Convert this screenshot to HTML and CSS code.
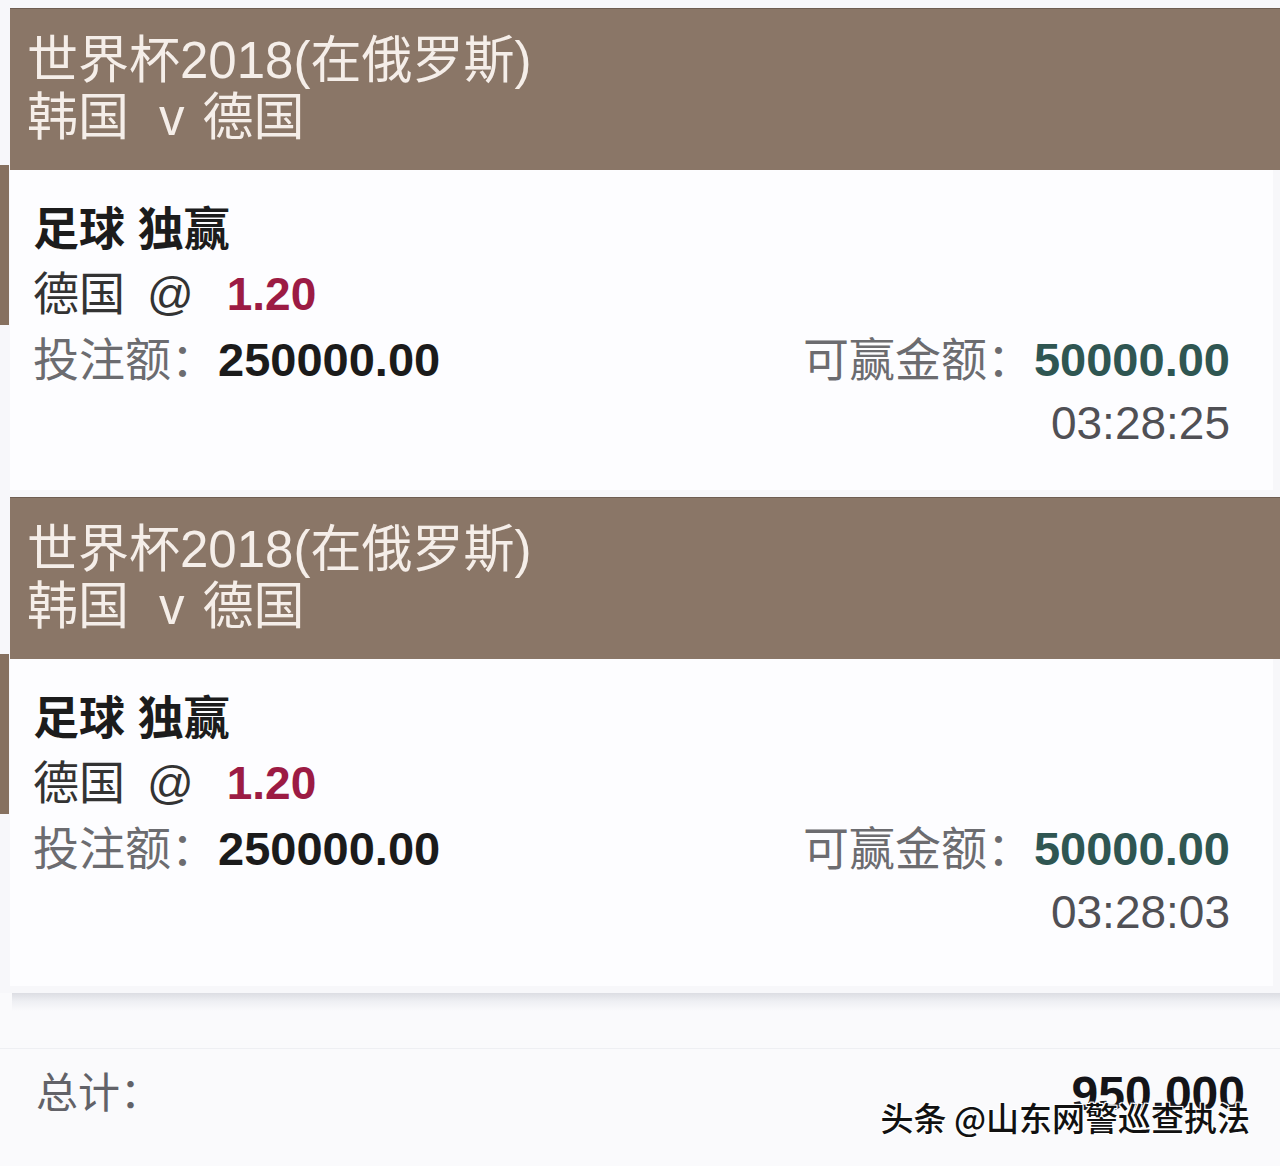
FILE: index.html
```html
<!DOCTYPE html>
<html lang="zh-CN">
<head>
<meta charset="utf-8">
<title>投注单</title>
<link rel="stylesheet" href="styles.css">
</head>
<body>
<div class="page">
  <section class="bet">
    <div class="rail"><div class="rail-mark"></div></div>
    <div class="bet-main">
      <header class="bet-head">
        <div class="event">世界杯2018(在俄罗斯)</div>
        <div class="match">韩国<span class="vs">v</span>德国</div>
      </header>
      <div class="bet-body">
        <div class="row market">足球 独赢</div>
        <div class="row pick">德国<span class="at">@</span><span class="odds">1.20</span></div>
        <div class="row amounts">
          <div class="stake"><span class="label">投注额：</span><span class="num">250000.00</span></div>
          <div class="win"><span class="label">可赢金额：</span><span class="num win-num">50000.00</span></div>
        </div>
        <div class="row time">03:28:25</div>
      </div>
    </div>
  </section>

  <section class="bet">
    <div class="rail"><div class="rail-mark"></div></div>
    <div class="bet-main">
      <header class="bet-head">
        <div class="event">世界杯2018(在俄罗斯)</div>
        <div class="match">韩国<span class="vs">v</span>德国</div>
      </header>
      <div class="bet-body last">
        <div class="row market">足球 独赢</div>
        <div class="row pick">德国<span class="at">@</span><span class="odds">1.20</span></div>
        <div class="row amounts">
          <div class="stake"><span class="label">投注额：</span><span class="num">250000.00</span></div>
          <div class="win"><span class="label">可赢金额：</span><span class="num win-num">50000.00</span></div>
        </div>
        <div class="row time">03:28:03</div>
      </div>
    </div>
  </section>

  <footer class="total">
    <div class="total-rule"></div>
    <div class="total-row">
      <span class="total-label">总计：</span>
      <span class="total-num">950,000</span>
    </div>
    <div class="watermark">头条 @山东网警巡查执法</div>
  </footer>
</div>
</body>
</html>
```

FILE: styles.css
```css
* { box-sizing: border-box; }

html, body {
  margin: 0;
  padding: 0;
  background: #f7f7fa;
}

body {
  font-family: "Liberation Sans", "Noto Sans CJK SC", sans-serif;
  width: 1280px;
  height: 1166px;
  overflow: hidden;
}

.page {
  padding-top: 8px;
  display: flex;
  flex-direction: column;
  gap: 7px;
}

.bet {
  display: flex;
}

.rail {
  width: 10px;
  flex: none;
  padding-top: 157px;
}

.rail-mark {
  width: 9px;
  height: 160px;
  background: #86705f;
}

.bet-main {
  flex: 1;
  display: flex;
  flex-direction: column;
}

.bet-head {
  height: 162px;
  background: #8a7667;
  border-top: 1px solid #6e5d52;
  padding: 23px 0 0 17px;
  color: #f5eee9;
  font-size: 51px;
  line-height: 57px;
}

.vs {
  margin: 0 18px 0 30px;
}

.bet-body {
  background: #fdfdff;
  margin-right: 7px;
  padding: 27px 43px 37px 23px;
  font-size: 46px;
  line-height: 65px;
  display: flex;
  flex-direction: column;
}

.bet-body.last {
  padding-bottom: 44px;
}

.market {
  font-weight: 700;
  color: #1c1c1c;
}

.pick {
  color: #333333;
}

.at {
  margin-left: 22px;
  font-family: "Liberation Sans", sans-serif;
}

.odds {
  margin-left: 33px;
  font-weight: 700;
  color: #9c1b44;
}

.amounts {
  display: flex;
  justify-content: space-between;
  align-items: baseline;
}

.label {
  color: #6c6c70;
}

.num {
  font-weight: 700;
  font-size: 47px;
  color: #1b1b1b;
  margin-left: 1px;
}

.win-num {
  color: #2f5652;
}

.time {
  text-align: right;
  color: #505055;
  line-height: 60px;
}

.total {
  position: relative;
  height: 180px;
  background: #fafafc;
}

.total-rule {
  margin-left: 12px;
  height: 18px;
  background: linear-gradient(#dcdde3, #eeeff3 45%, #fafafc);
}

.total-row {
  margin-top: 37px;
  display: flex;
  justify-content: space-between;
  align-items: center;
  padding: 20px 35px 0 36px;
  border-top: 1px solid #eeeff3;
}

.total-label {
  font-size: 42px;
  color: #626268;
  line-height: 50px;
}

.total-num {
  font-size: 48px;
  font-weight: 700;
  color: #141418;
  line-height: 50px;
}

.watermark {
  position: absolute;
  right: 30px;
  top: 104px;
  font-size: 33px;
  line-height: 40px;
  font-weight: 500;
  color: #111;
  font-family: "Noto Sans CJK SC", sans-serif;
  text-shadow: 0 0 2px #fff, 0 0 3px #fff, 1px 1px 0 #fff, -1px -1px 0 #fff, 1px -1px 0 #fff, -1px 1px 0 #fff;
}
```
